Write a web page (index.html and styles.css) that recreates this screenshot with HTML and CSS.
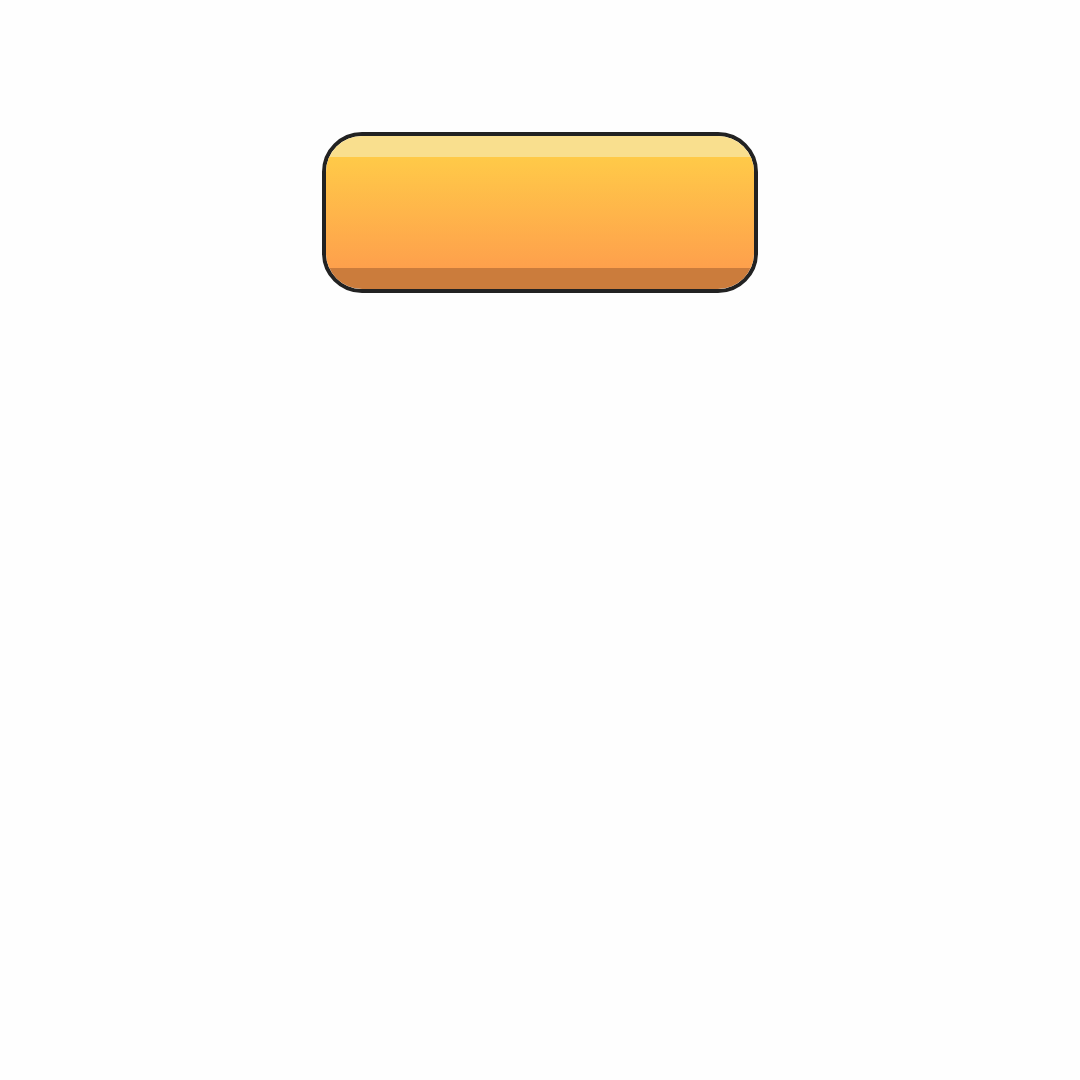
FILE: index.html
```html
<!DOCTYPE html>
<html>
<head>
<meta charset="utf-8">
<link rel="stylesheet" href="styles.css">
</head>
<body>
<div class="page">
  <div class="btn">
    <div class="btn-highlight"></div>
    <div class="btn-body"></div>
    <div class="btn-shade"></div>
  </div>
</div>
</body>
</html>
```
FILE: styles.css
```css
html, body {
  margin: 0;
  padding: 0;
  background: #fefefe;
  font-family: "Liberation Sans", Arial, sans-serif;
}
.page {
  width: 1080px;
  height: 1080px;
  display: flex;
  justify-content: center;
  align-items: flex-start;
  padding-top: 132px;
  box-sizing: border-box;
}
.btn {
  width: 436px;
  height: 161px;
  box-sizing: border-box;
  border: 4px solid #222222;
  border-radius: 40px;
  overflow: hidden;
  display: flex;
  flex-direction: column;
}
.btn-highlight {
  height: 21px;
  background: #f9df8e;
}
.btn-body {
  flex: 1;
  background: linear-gradient(to bottom, #ffca48, #fea04c);
}
.btn-shade {
  height: 21px;
  background: #cb7c3c;
}
```
